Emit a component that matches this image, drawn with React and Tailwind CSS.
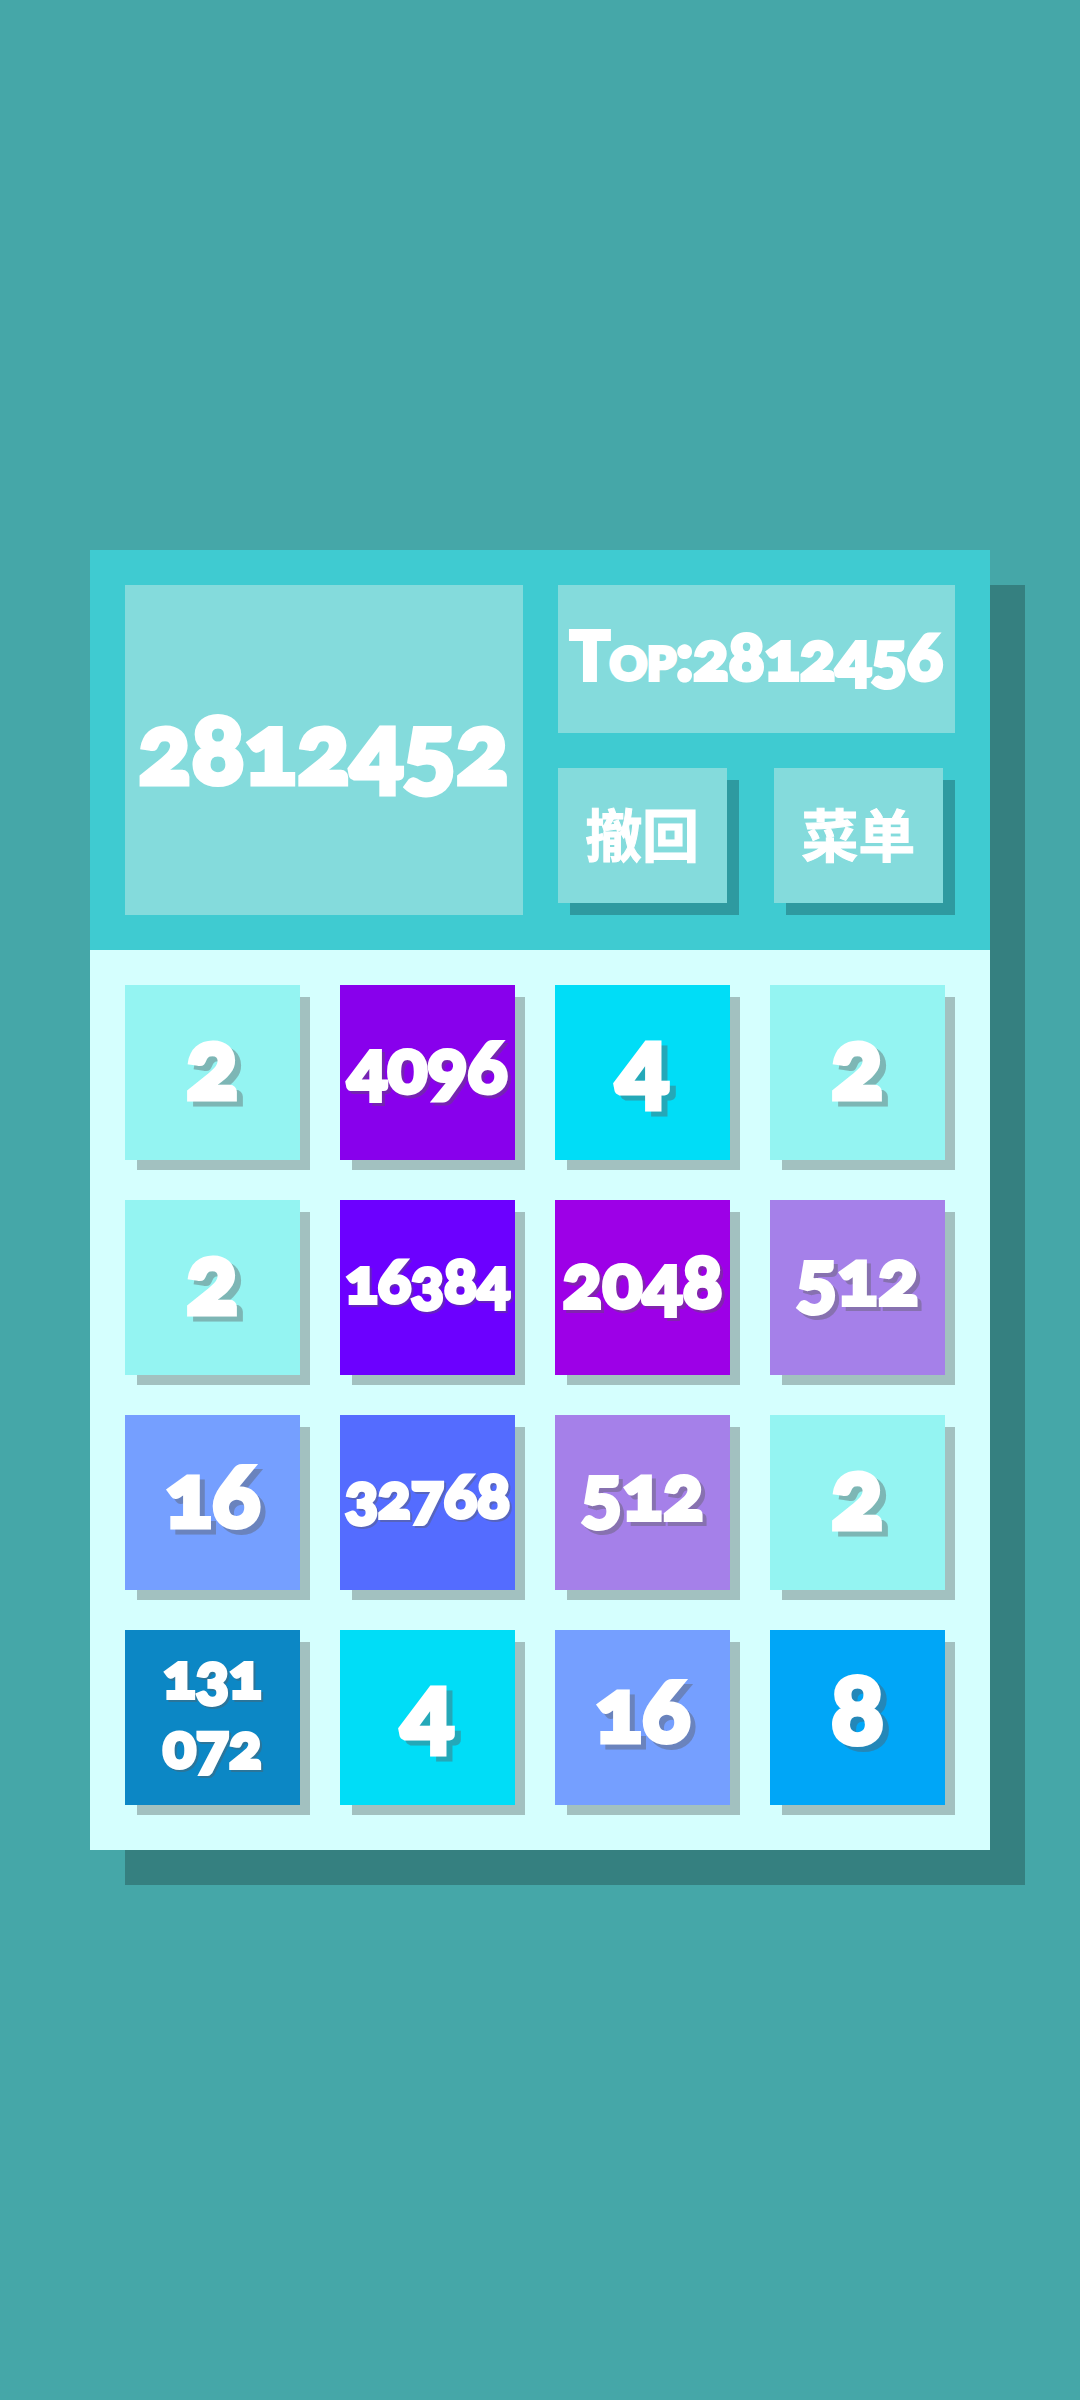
import React, { useState } from 'react';
import clsx from 'clsx';

const BOARD = [
    2, 4096, 4, 2,
    2, 16384, 2048, 512,
    16, 32768, 512, 2,
    131072, 4, 16, 8,
];

const TILE_COLORS = {
    2: 'bg-[#94f4f2]',
    4: 'bg-[#00ddf7]',
    8: 'bg-[#00a6f7]',
    16: 'bg-[#759fff]',
    512: 'bg-[#a580e9]',
    2048: 'bg-[#9d00e7]',
    4096: 'bg-[#8800ec]',
    16384: 'bg-[#6c00ff]',
    32768: 'bg-[#546cff]',
    131072: 'bg-[#0c87c5]',
};

// More digits, smaller text
const TILE_SIZES = {
    1: 'pb-6 text-[98px] leading-[98px] [-webkit-text-stroke:5px_white]',
    2: 'pb-5 text-[88px] leading-[88px] [-webkit-text-stroke:5px_white]',
    3: 'pb-6 text-[76px] leading-[76px] [-webkit-text-stroke:4px_white]',
    4: 'pb-4 text-[74px] leading-[74px] [-webkit-text-stroke:4px_white]',
    5: 'pb-4 text-[61px] leading-[70px] [-webkit-text-stroke:4px_white]',
};

const TEXT_SHADOWS = {
    1: '[filter:drop-shadow(6px_5px_0_rgba(90,90,90,0.4))]',
    2: '[filter:drop-shadow(5px_5px_0_rgba(90,90,90,0.4))]',
    3: '[filter:drop-shadow(4px_4px_0_rgba(90,90,90,0.4))]',
    4: '[filter:drop-shadow(3px_3px_0_rgba(90,90,90,0.4))]',
    5: '[filter:drop-shadow(2px_2px_0_rgba(90,90,90,0.4))]',
};

function Tile({ value }) {
    const text = String(value);
    const size = Math.min(text.length, 5);
    // Six digits do not fit on one line, so they break in the middle
    const lines = text.length > 5 ? [text.slice(0, 3), text.slice(3)] : [text];

    return (
        <div
            className={clsx(
                'aspect-square flex flex-col items-center justify-center shadow-[11px_11px_0_-1px_rgba(34,34,34,0.28)]',
                TILE_COLORS[value],
                TILE_SIZES[size]
            )}
        >
            {lines.map((line) => (
                <span key={line} className={TEXT_SHADOWS[size]}>{line}</span>
            ))}
        </div>
    );
}

function MenuButton({ children, onClick }) {
    return (
        <button
            type="button"
            onClick={onClick}
            className="bg-[#84dbdc] text-[57px] leading-[57px] font-bold shadow-[12px_12px_0_#2e9aa0] [-webkit-text-stroke:1px_white] cursor-pointer"
        >
            {children}
        </button>
    );
}

export default function App() {
    const [board, setBoard] = useState(BOARD);

    return (
        <main className="min-h-screen bg-[#45a7a8] flex items-center justify-center text-white font-black oldstyle-nums font-['Lato_Black','Lato','Noto_Sans_CJK_SC',sans-serif]">
            <div className="w-5/6 shadow-[35px_35px_0_#358080]">

                {/* Scores and buttons */}
                <header className="bg-[#3fcbd1] p-[35px] grid grid-cols-2 gap-[35px]">
                    <div className="bg-[#84dbdc] pb-2 flex items-center justify-center text-[98px] leading-[98px] [-webkit-text-stroke:5px_white]">
                        2812452
                    </div>
                    <div className="grid gap-[35px]">
                        <div className="bg-[#84dbdc] h-[148px] pb-2 flex items-center justify-center text-[66px] leading-[66px] [-webkit-text-stroke:4px_white] [font-variant-caps:small-caps]">
                            Top:2812456
                        </div>
                        <div className="grid grid-cols-2 gap-[47px] h-[147px] pr-3 pb-3">
                            <MenuButton onClick={() => setBoard(BOARD)}>撤回</MenuButton>
                            <MenuButton>菜单</MenuButton>
                        </div>
                    </div>
                </header>

                {/* Game board */}
                <section className="bg-[#d5fffe] pt-[35px] pl-[35px] pr-[45px] pb-[45px] grid grid-cols-4 gap-10">
                    {board.map((value, i) => (
                        <Tile key={i} value={value} />
                    ))}
                </section>
            </div>
        </main>
    );
}
